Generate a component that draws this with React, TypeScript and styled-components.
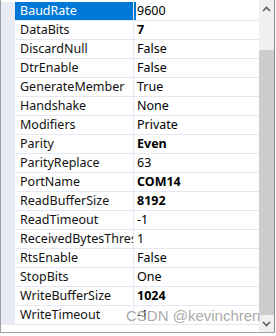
import React from "react";
import styled, { createGlobalStyle } from "styled-components";

const GlobalStyle = createGlobalStyle`
  html, body {
    margin: 0;
    padding: 0;
    background: #ffffff;
  }
`;

const LINE = "#e4e8f4";
const SELECT = "#0078d7";

const Frame = styled.div`
  position: relative;
  display: flex;
  width: 275px;
  height: 333px;
  box-sizing: border-box;
  border-left: 1px solid #a0a0a0;
  border-right: 1px solid #8a8a8a;
  border-bottom: 1px solid #a0a0a0;
  background: #ffffff;
  font-family: "Noto Sans", "Noto Sans CJK SC", sans-serif;
  font-size: 12.5px;
  overflow: hidden;
`;

const Grid = styled.div`
  flex: 1;
  padding-top: 2px;
`;

const Row = styled.div`
  display: flex;
  height: 19px;
`;

const Gutter = styled.div`
  width: 14px;
  flex: none;
  background: #e9ebf4;
`;

const NameCell = styled.div<{ $selected?: boolean }>`
  width: 113px;
  flex: none;
  padding-left: 5px;
  line-height: 18px;
  border-bottom: 1px solid ${LINE};
  border-right: 1px solid ${LINE};
  white-space: nowrap;
  overflow: hidden;
  color: ${(p) => (p.$selected ? "#ffffff" : "#111111")};
  background: ${(p) => (p.$selected ? SELECT : "#ffffff")};
`;

const ValueCell = styled.div<{ $selected?: boolean; $bold?: boolean }>`
  flex: 1;
  padding-left: 3px;
  line-height: 18px;
  border-bottom: 1px solid ${LINE};
  white-space: nowrap;
  overflow: hidden;
  color: #000000;
  font-weight: ${(p) => (p.$bold ? 700 : 400)};
  box-shadow: ${(p) => (p.$selected ? `inset 2px 0 0 ${SELECT}` : "none")};
`;

const ScrollBar = styled.div`
  width: 15px;
  flex: none;
  display: flex;
  flex-direction: column;
  background: #f0f0f0;
`;

const ArrowButton = styled.div`
  height: 17px;
  flex: none;
  display: flex;
  align-items: center;
  justify-content: center;
`;

const Track = styled.div`
  flex: 1;
  padding-top: 33px;
  display: flex;
  flex-direction: column;
`;

const Thumb = styled.div`
  flex: 1;
  background: #cdcdcd;
`;

const Watermark = styled.div`
  position: absolute;
  left: 125px;
  top: 307px;
  font-family: "Liberation Sans", Arial, sans-serif;
  font-size: 15px;
  color: rgba(130, 130, 130, 0.7);
  white-space: nowrap;
  text-shadow: 0 0 1px rgba(255, 255, 255, 0.8);
  pointer-events: none;
`;

const rows: { name: string; value: string; bold?: boolean }[] = [
  { name: "BaudRate", value: "9600" },
  { name: "DataBits", value: "7", bold: true },
  { name: "DiscardNull", value: "False" },
  { name: "DtrEnable", value: "False" },
  { name: "GenerateMember", value: "True" },
  { name: "Handshake", value: "None" },
  { name: "Modifiers", value: "Private" },
  { name: "Parity", value: "Even", bold: true },
  { name: "ParityReplace", value: "63" },
  { name: "PortName", value: "COM14", bold: true },
  { name: "ReadBufferSize", value: "8192", bold: true },
  { name: "ReadTimeout", value: "-1" },
  { name: "ReceivedBytesThreshold", value: "1" },
  { name: "RtsEnable", value: "False" },
  { name: "StopBits", value: "One" },
  { name: "WriteBufferSize", value: "1024", bold: true },
  { name: "WriteTimeout", value: "-1" },
];

function Chevron({ up }: { up?: boolean }) {
  return (
    <svg width="9" height="6" viewBox="0 0 9 6">
      <polyline
        points={up ? "1,5 4.5,1.5 8,5" : "1,1 4.5,4.5 8,1"}
        fill="none"
        stroke="#606060"
        strokeWidth="1.6"
      />
    </svg>
  );
}

export default function App() {
  return (
    <>
      <GlobalStyle />
      <Frame>
        <Grid>
          {rows.map((r, i) => (
            <Row key={r.name}>
              <Gutter />
              <NameCell $selected={i === 0}>{r.name}</NameCell>
              <ValueCell $selected={i === 0} $bold={r.bold}>
                {r.value}
              </ValueCell>
            </Row>
          ))}
        </Grid>
        <ScrollBar>
          <ArrowButton>
            <Chevron up />
          </ArrowButton>
          <Track>
            <Thumb />
          </Track>
          <ArrowButton>
            <Chevron />
          </ArrowButton>
        </ScrollBar>
        <Watermark>CSDN @kevinchren</Watermark>
      </Frame>
    </>
  );
}
